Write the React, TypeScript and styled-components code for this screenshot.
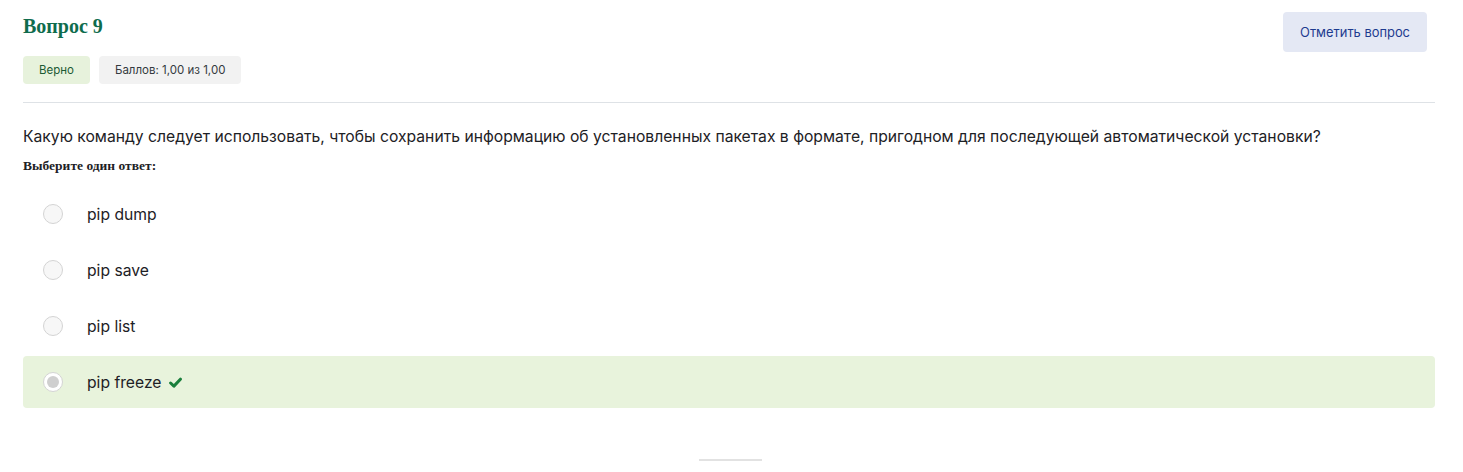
import React from "react";
import styled, { createGlobalStyle } from "styled-components";

const Global = createGlobalStyle`
  html, body { margin: 0; padding: 0; background: #fff; }
  body { font-family: Inter, "Noto Sans", sans-serif; color: #1d2125; }
`;

const Page = styled.div`
  padding: 12px 28px 0 23px;
  height: 472px;
  box-sizing: border-box;
  overflow: hidden;
`;

const Header = styled.div`
  display: flex;
  justify-content: space-between;
  align-items: flex-start;
`;

const Info = styled.div`
  display: flex;
  flex-direction: column;
`;

const Title = styled.h3`
  margin: 0;
  font-family: "Liberation Serif", "DejaVu Serif", serif;
  font-weight: 700;
  font-size: 20px;
  line-height: 29px;
  color: #0f6c4d;
`;

const Badges = styled.div`
  display: flex;
  gap: 9px;
  margin-top: 15px;
`;

const Badge = styled.span<{ $tone: "success" | "neutral" }>`
  display: inline-flex;
  align-items: center;
  height: 28px;
  padding: 0 16px;
  border-radius: 4px;
  font-size: 11.5px;
  background: ${(p) => (p.$tone === "success" ? "#e7f2dc" : "#f2f2f2")};
  color: ${(p) => (p.$tone === "success" ? "#1c5b34" : "#343a40")};
`;

const FlagButton = styled.button`
  height: 40px;
  padding: 0 17px;
  margin-right: 8px;
  border: none;
  border-radius: 4px;
  background: #e4e8f4;
  color: #1d3b8f;
  font-family: Inter, "Noto Sans", sans-serif;
  font-size: 12.9px;
  cursor: pointer;
`;

const Divider = styled.hr`
  margin: 18px 0 0;
  border: none;
  border-top: 1px solid #dee2e6;
`;

const Question = styled.p`
  margin: 22px 0 0;
  font-size: 15.7px;
  line-height: 24px;
  color: #1d2125;
`;

const Prompt = styled.div`
  margin-top: 8px;
  font-family: "Liberation Serif", "DejaVu Serif", serif;
  font-weight: 700;
  font-size: 13.5px;
  line-height: 18px;
  color: #1d2125;
`;

const Answers = styled.div`
  display: flex;
  flex-direction: column;
  gap: 4px;
  margin-top: 13px;
`;

const Option = styled.div<{ $correct?: boolean }>`
  display: flex;
  align-items: center;
  height: 52px;
  padding-left: 20px;
  border-radius: 4px;
  background: ${(p) => (p.$correct ? "#e8f3dc" : "transparent")};
`;

const Radio = styled.span<{ $checked?: boolean }>`
  width: 20px;
  height: 20px;
  box-sizing: border-box;
  border-radius: 50%;
  border: 1px solid #d4d4d4;
  background: ${(p) => (p.$checked ? "#fff" : "#f7f7f7")};
  display: flex;
  align-items: center;
  justify-content: center;
  flex-shrink: 0;
  &::after {
    content: "";
    display: ${(p) => (p.$checked ? "block" : "none")};
    width: 12px;
    height: 12px;
    border-radius: 50%;
    background: #cfcfcf;
  }
`;

const Label = styled.span`
  margin-left: 24px;
  font-size: 15.7px;
  color: #1d2125;
  display: inline-flex;
  align-items: center;
  gap: 7px;
`;

const Footer = styled.div`
  display: flex;
  justify-content: center;
  margin-top: 51px;
`;

const FooterTab = styled.div`
  width: 63px;
  height: 20px;
  margin-left: 2px;
  border-top: 2px solid #e2e2e2;
`;

const Check = () => (
  <svg width="13" height="11" viewBox="0 0 13 11" aria-hidden="true">
    <path d="M1.6 6 L4.9 9.1 L11.4 2.2" fill="none" stroke="#1a7f3c" strokeWidth="3" strokeLinecap="round" strokeLinejoin="round" />
  </svg>
);

const options = [
  { text: "pip dump" },
  { text: "pip save" },
  { text: "pip list" },
  { text: "pip freeze", correct: true },
];

export default function App() {
  return (
    <Page>
      <Global />
      <Header>
        <Info>
          <Title>Вопрос 9</Title>
          <Badges>
            <Badge $tone="success">Верно</Badge>
            <Badge $tone="neutral">Баллов: 1,00 из 1,00</Badge>
          </Badges>
        </Info>
        <FlagButton>Отметить вопрос</FlagButton>
      </Header>
      <Divider />
      <Question>
        Какую команду следует использовать, чтобы сохранить информацию об установленных пакетах в формате, пригодном для последующей автоматической установки?
      </Question>
      <Prompt>Выберите один ответ:</Prompt>
      <Answers>
        {options.map((o) => (
          <Option key={o.text} $correct={o.correct}>
            <Radio $checked={o.correct} />
            <Label>
              {o.text}
              {o.correct && <Check />}
            </Label>
          </Option>
        ))}
      </Answers>
      <Footer>
        <FooterTab />
      </Footer>
    </Page>
  );
}
